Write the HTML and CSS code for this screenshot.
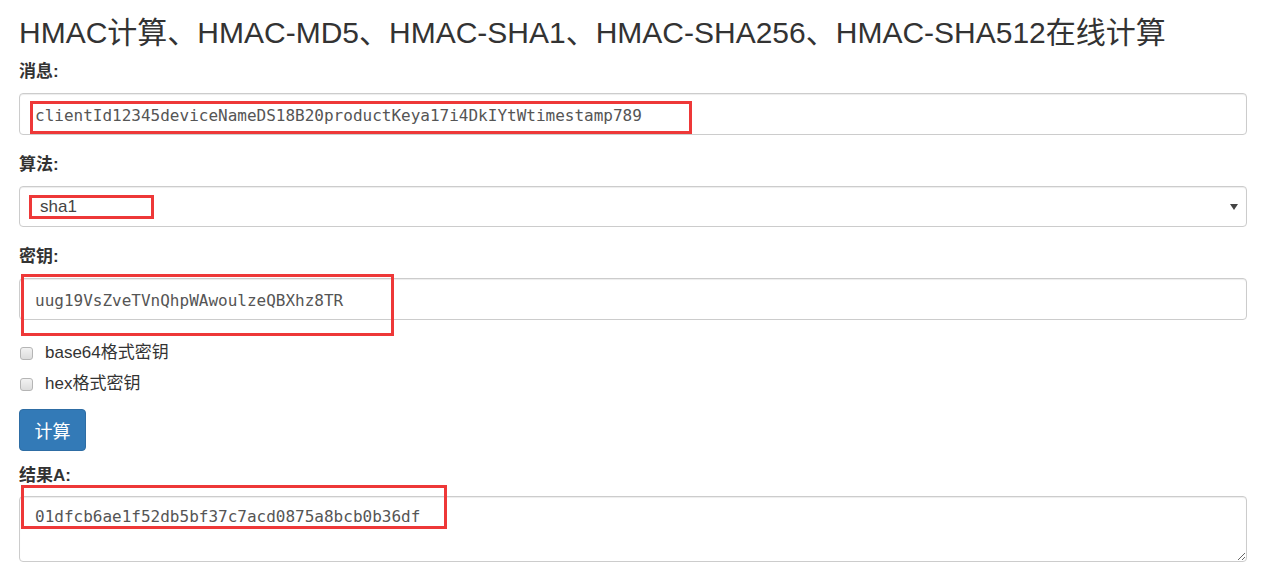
FILE: index.html
```html
<!DOCTYPE html>
<html lang="zh">
<head>
<meta charset="utf-8">
<title>HMAC在线计算</title>
<link rel="stylesheet" href="styles.css">
</head>
<body>
<div class="page">
  <h2 class="title">HMAC计算、HMAC-MD5、HMAC-SHA1、HMAC-SHA256、HMAC-SHA512在线计算</h2>

  <div class="group">
    <label class="label">消息:</label>
    <div class="field">
      <input class="control mono" type="text" value="clientId12345deviceNameDS18B20productKeya17i4DkIYtWtimestamp789">
      <span class="mark mark-msg"></span>
    </div>
  </div>

  <div class="group">
    <label class="label">算法:</label>
    <div class="field select-wrap">
      <select class="control select">
        <option>sha1</option>
      </select>
      <span class="mark mark-alg"></span>
    </div>
  </div>

  <div class="group group-key">
    <label class="label">密钥:</label>
    <div class="field">
      <input class="control mono" type="text" value="uug19VsZveTVnQhpWAwoulzeQBXhz8TR">
      <span class="mark mark-key"></span>
    </div>
  </div>

  <div class="checks">
    <label class="check"><input type="checkbox" class="box"><span>base64格式密钥</span></label>
    <label class="check"><input type="checkbox" class="box"><span>hex格式密钥</span></label>
  </div>

  <button class="btn" type="button">计算</button>

  <div class="group group-result">
    <label class="label">结果A:</label>
    <div class="field">
      <textarea class="control mono area">01dfcb6ae1f52db5bf37c7acd0875a8bcb0b36df</textarea>
      <span class="mark mark-res"></span>
    </div>
  </div>
</div>
</body>
</html>
```

FILE: styles.css
```css
html, body {
  margin: 0;
  padding: 0;
  background: #fff;
}

body {
  font-family: "Liberation Sans", Arial, "Noto Sans CJK SC", sans-serif;
  color: #333;
}

.page {
  padding: 0 39px 0 19px;
  display: flex;
  flex-direction: column;
}

.title {
  font-weight: normal;
  font-size: 30px;
  line-height: 36px;
  margin: 15px 0 0 0;
  color: #333;
}

.group {
  display: flex;
  flex-direction: column;
}

.label {
  font-weight: bold;
  font-size: 17px;
  line-height: 22px;
  margin-top: 10px;
  margin-bottom: 10px;
  color: #333;
}

.group + .group .label {
  margin-top: 19px;
}

.field {
  position: relative;
}

.control {
  display: block;
  box-sizing: border-box;
  width: 100%;
  height: 42px;
  margin: 0;
  padding: 8px 15px 6px;
  border: 1px solid #ccc;
  border-radius: 4px;
  background: #fff;
  box-shadow: inset 0 1px 1px rgba(0,0,0,0.075);
  color: #555;
  outline: none;
}

.mono {
  font-family: "DejaVu Sans Mono", "Liberation Mono", monospace;
  font-size: 16px;
}

.select {
  height: 41px;
  appearance: none;
  -webkit-appearance: none;
  font-family: "Liberation Sans", Arial, sans-serif;
  font-size: 17px;
  padding: 6px 15px 6px 20px;
  color: #444;
}

.select-wrap::after {
  content: "";
  position: absolute;
  right: 9px;
  top: 18px;
  border-left: 4px solid transparent;
  border-right: 4px solid transparent;
  border-top: 6px solid #444;
}

.area {
  height: 66px;
  resize: vertical;
  padding-top: 9px;
  line-height: 22px;
}

.mark {
  position: absolute;
  border: 3px solid #ee3838;
  pointer-events: none;
}

.mark-msg { left: 11px; top: 8px; width: 656px; height: 27px; }
.mark-alg { left: 10px; top: 9px; width: 119px; height: 18px; }
.mark-key { left: 2px; top: -4px; width: 367px; height: 56px; }
.mark-res { left: 2px; top: -11px; width: 420px; height: 38px; }

.checks {
  display: flex;
  flex-direction: column;
  margin-top: 22px;
  gap: 9px;
}

.check {
  display: flex;
  align-items: center;
  font-size: 17px;
  line-height: 22px;
  color: #333;
}

.box {
  appearance: none;
  -webkit-appearance: none;
  width: 13px;
  height: 13px;
  margin: 0 12px 0 1px;
  border: 1px solid #b5b5b5;
  border-radius: 3px;
  background: linear-gradient(#f2f2f2, #dcdcdc);
  box-sizing: border-box;
}

.btn {
  align-self: flex-start;
  margin-top: 14px;
  width: 67px;
  height: 42px;
  background: #337ab7;
  border: 1px solid #2e6da4;
  border-radius: 4px;
  color: #fff;
  font-family: "Liberation Sans", Arial, "Noto Sans CJK SC", sans-serif;
  font-size: 18px;
  padding: 0;
}

.group-result .label {
  margin-top: 14px;
  margin-bottom: 9px;
}
```
